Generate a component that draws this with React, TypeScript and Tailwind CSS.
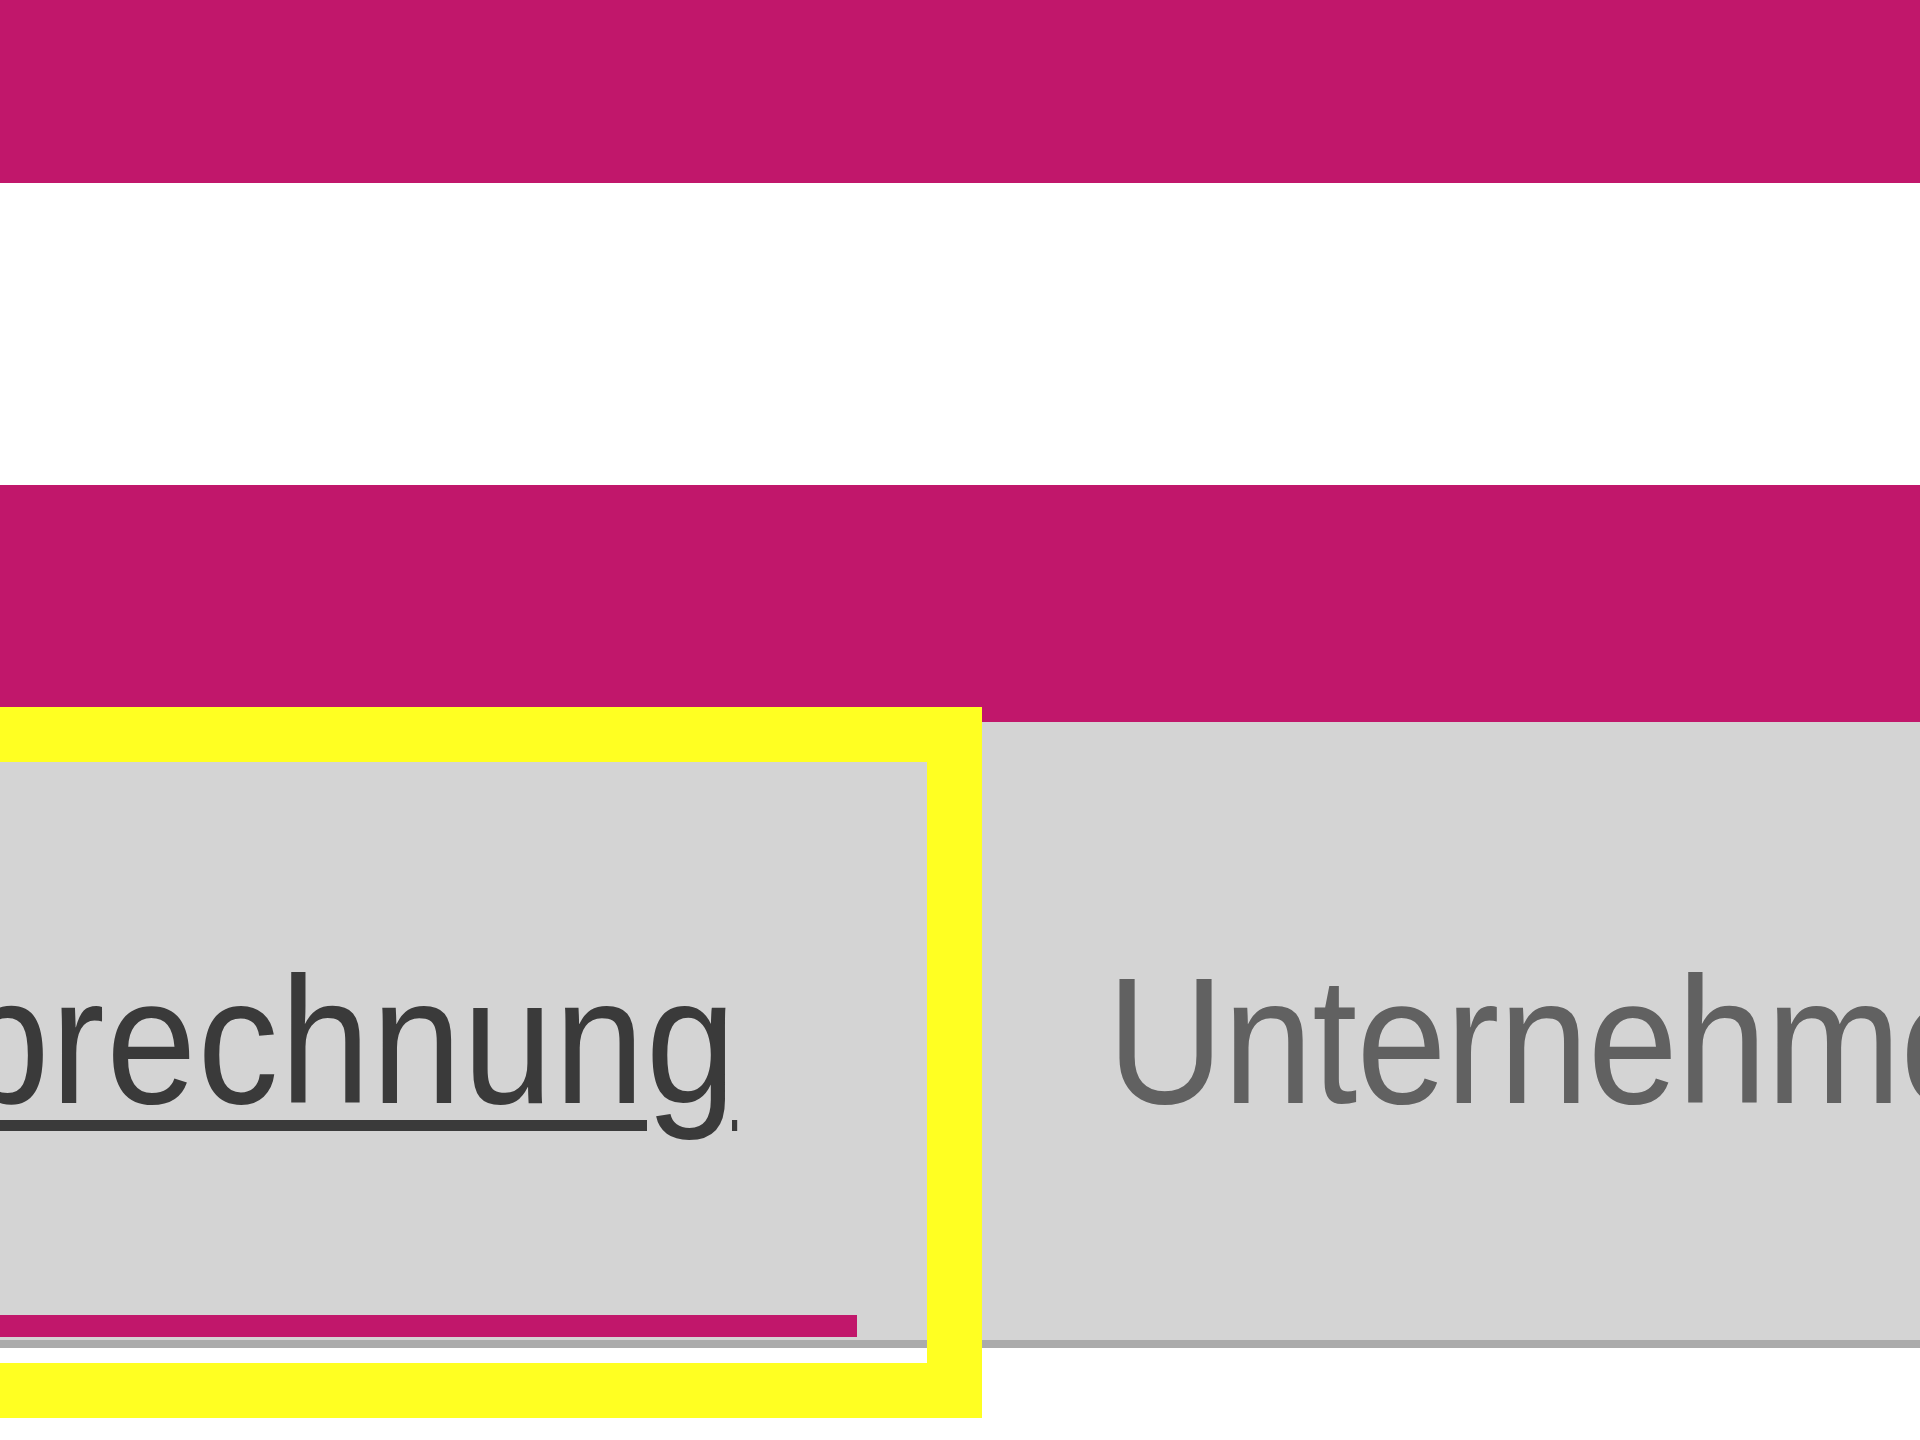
import React from "react";

export default function App() {
  return (
    <div className="w-[1920px] h-[1440px] overflow-hidden bg-white font-['Liberation_Sans',Arial,sans-serif]">
      <div className="h-[183px] bg-[#c1176b]" />
      <div className="h-[302px] bg-white" />
      <div className="h-[237px] bg-[#c1176b]" />
      <div
        role="tablist"
        className="ml-[-150px] flex h-[626px] items-start border-b-[8px] border-[#ababab] bg-[#d4d4d4]"
      >
        <div
          role="tab"
          aria-selected="true"
          tabIndex={0}
          className="mt-[40px] flex h-[601px] w-[1077px] shrink-0 flex-col pt-[189px] outline outline-[55px] outline-[#ffff22]"
        >
          <span className="inline-block self-start origin-left scale-x-[0.9] whitespace-nowrap text-[180px] leading-none tracking-[1.5px] text-[#3a3a3a] underline decoration-[11px] underline-offset-[17px]">
            Abrechnung
          </span>
          <div className="mt-auto mb-[26px] mr-[70px] h-[22px] bg-[#c1176b]" />
        </div>
        <div role="tab" tabIndex={-1} className="shrink-0 pl-[180px] pt-[229px]">
          <span className="inline-block origin-left scale-x-[0.9] whitespace-nowrap text-[180px] leading-none tracking-[-1px] text-[#616161]">
            Unternehmen
          </span>
        </div>
      </div>
    </div>
  );
}
